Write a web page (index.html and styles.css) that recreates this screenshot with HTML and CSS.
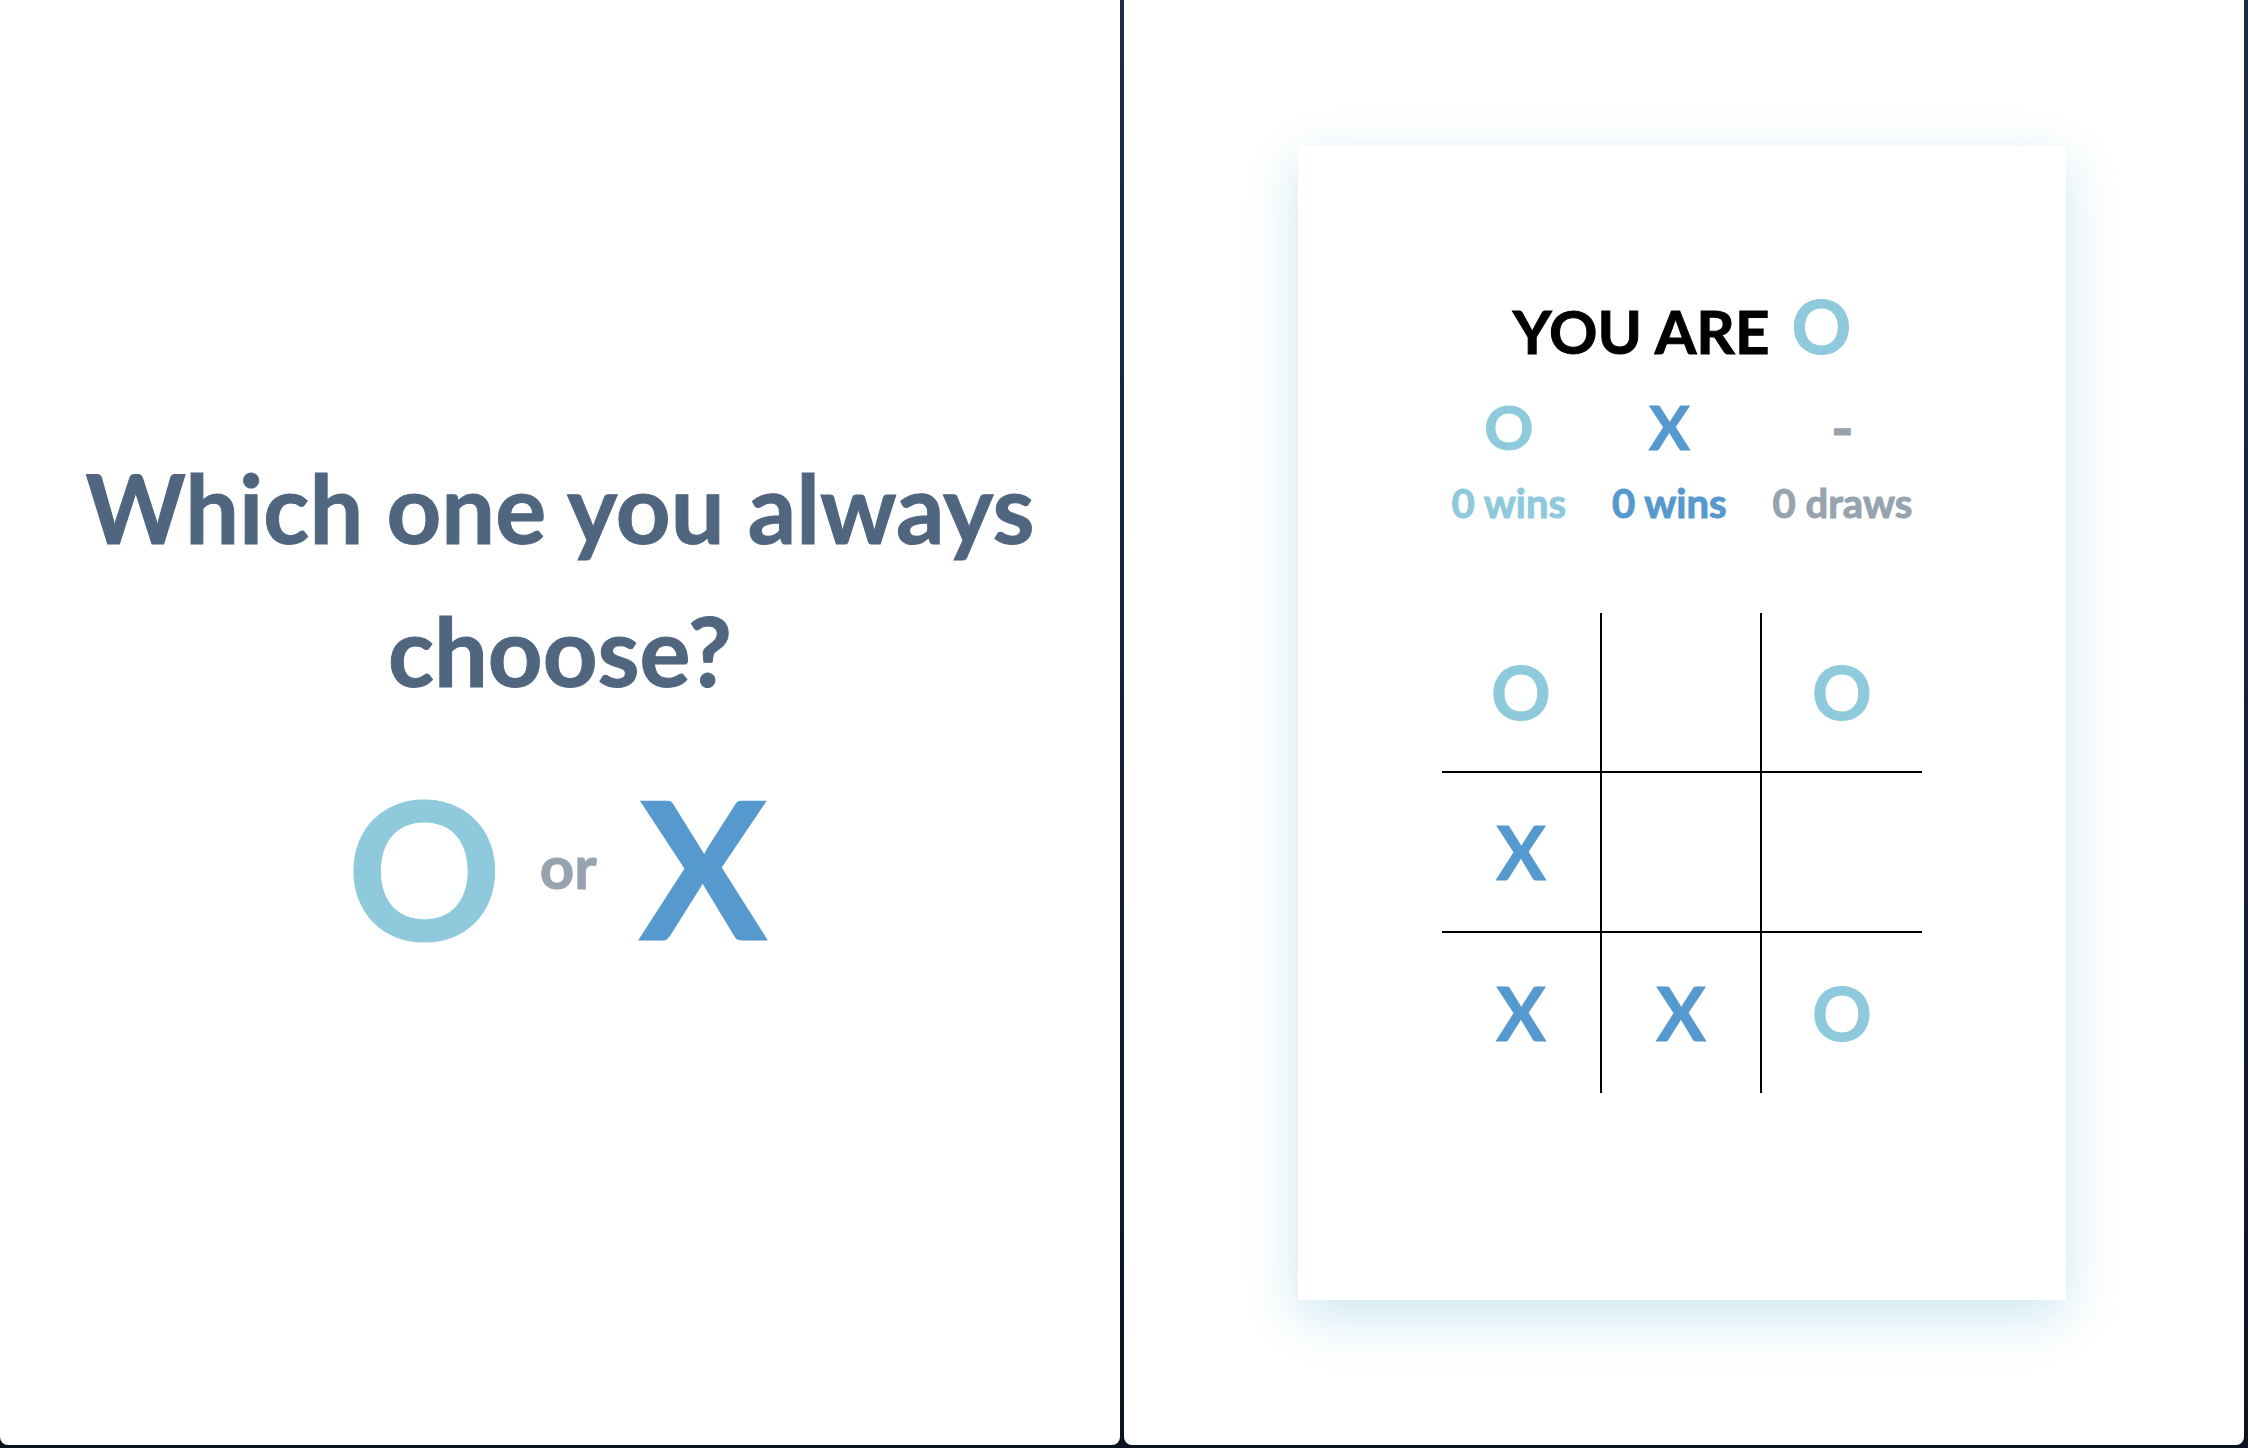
FILE: index.html
```html
<!DOCTYPE html>
<html lang="en">
<head>
<meta charset="utf-8">
<title>Tic Tac Toe</title>
<link rel="stylesheet" href="styles.css">
</head>
<body>
  <div class="frame">
    <section class="panel panel-choose">
      <h1 class="question">Which one you always choose?</h1>
      <div class="choices">
        <span class="choice mark-o">O</span>
        <span class="or">or</span>
        <span class="choice mark-x">X</span>
      </div>
    </section>
    <section class="panel panel-game">
      <div class="card">
        <h2 class="title"><span class="title-text">YOU ARE</span><span class="title-mark mark-o">O</span></h2>
        <div class="scores">
          <div class="score">
            <span class="score-sym mark-o">O</span>
            <span class="score-label mark-o">0 wins</span>
          </div>
          <div class="score">
            <span class="score-sym mark-x">X</span>
            <span class="score-label mark-x">0 wins</span>
          </div>
          <div class="score">
            <span class="score-sym mark-d">-</span>
            <span class="score-label mark-d">0 draws</span>
          </div>
        </div>
        <div class="board">
          <div class="cell mark-o">O</div>
          <div class="cell"></div>
          <div class="cell mark-o">O</div>
          <div class="cell mark-x">X</div>
          <div class="cell"></div>
          <div class="cell"></div>
          <div class="cell mark-x">X</div>
          <div class="cell mark-x">X</div>
          <div class="cell mark-o">O</div>
        </div>
      </div>
    </section>
  </div>
</body>
</html>
```

FILE: styles.css
```css
* {
  box-sizing: border-box;
}

html, body {
  margin: 0;
  padding: 0;
}

body {
  width: 2248px;
  height: 1448px;
  overflow: hidden;
  background: linear-gradient(180deg, #1d2c4b 0%, #16223a 50%, #0c1320 100%);
  font-family: "Lato", "Open Sans", sans-serif;
  font-weight: 700;
  -webkit-text-stroke: 1px currentColor;
}

.frame {
  display: flex;
  gap: 4px;
  height: 1445px;
}

.panel {
  width: 1120px;
  height: 1445px;
  background: #ffffff;
  border-radius: 0 0 8px 8px;
}

.mark-o { color: #8ecadb; }
.mark-x { color: #5699cf; }
.mark-d { color: #97a3ae; }

/* Left panel */
.panel-choose {
  padding-top: 436px;
  text-align: center;
}

.question {
  margin: 0 auto;
  padding: 0 40px;
  font-size: 95.5px;
  line-height: 143px;
  font-weight: 700;
  color: #50667f;
}

.choices {
  display: flex;
  justify-content: center;
  align-items: center;
  margin-top: 29px;
  padding-right: 6px;
}

.choice {
  font-size: 192px;
  line-height: 1.2;
}

.or {
  margin: 0 42px 0 38px;
  font-size: 60px;
  line-height: 1.2;
  color: #97a3ae;
}

/* Right panel */
.card {
  width: 768px;
  height: 1154px;
  margin: 146px 0 0 174px;
  background: #ffffff;
  box-shadow: 0 16px 50px rgba(142, 202, 219, 0.45);
  display: flex;
  flex-direction: column;
  align-items: center;
}

.title {
  margin: 143px 0 0;
  display: flex;
  align-items: baseline;
  justify-content: center;
  font-size: 60px;
  line-height: 1;
  font-weight: 700;
  color: #000000;
}

.title-mark {
  font-size: 74px;
  margin-left: 22px;
}

.scores {
  display: flex;
  gap: 46px;
  margin-top: 33px;
}

.score {
  display: flex;
  flex-direction: column;
  align-items: center;
}

.score-sym {
  font-size: 61px;
  line-height: 1;
}

.score-label {
  margin-top: 26px;
  font-size: 40px;
  line-height: 1;
}

.board {
  margin-top: 90px;
  display: grid;
  grid-template-columns: repeat(3, 160px);
  grid-template-rows: repeat(3, 160px);
}

.cell {
  display: flex;
  align-items: center;
  justify-content: center;
  font-size: 74px;
  line-height: 1;
}

.cell:nth-child(3n+1),
.cell:nth-child(3n+2) {
  border-right: 2px solid #000;
}

.cell:nth-child(-n+6) {
  border-bottom: 2px solid #000;
}
```
